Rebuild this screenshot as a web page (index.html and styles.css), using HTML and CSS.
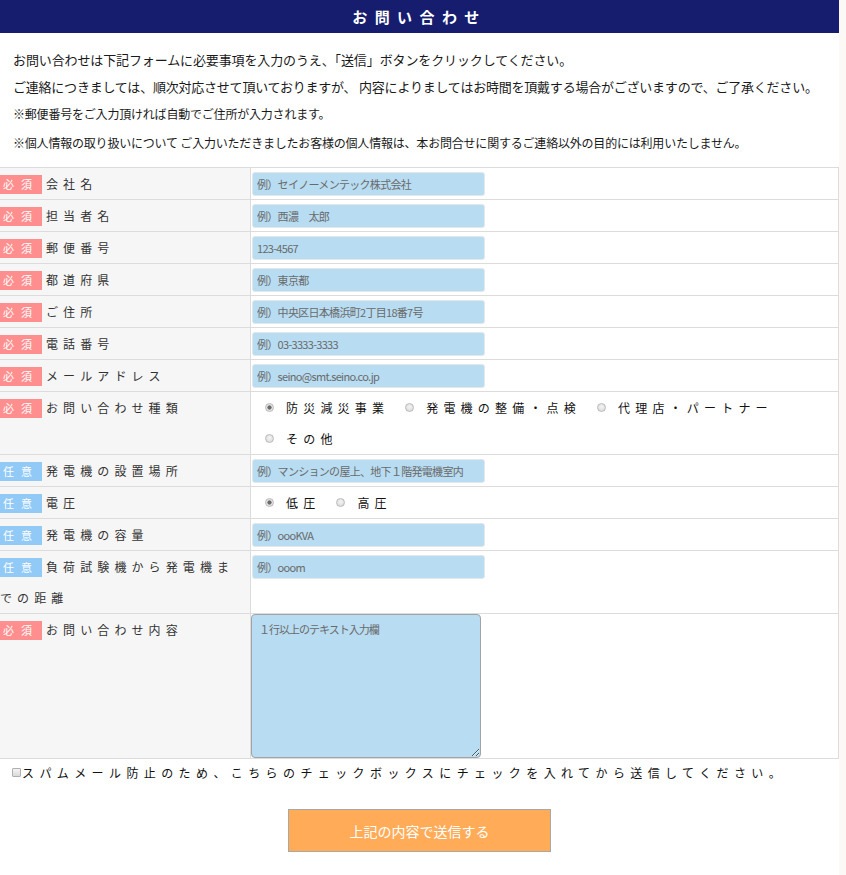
FILE: index.html
```html
<!DOCTYPE html>
<html lang="ja">
<head>
<meta charset="utf-8">
<title>お問い合わせ</title>
<link rel="stylesheet" href="styles.css">
</head>
<body>
<div class="page">
  <h1 class="title">お問い合わせ</h1>
  <div class="intro">
    <p class="lead">お問い合わせは下記フォームに必要事項を入力のうえ、「送信」ボタンをクリックしてください。</p>
    <p class="lead tight">ご連絡につきましては、順次対応させて頂いておりますが、 内容によりましてはお時間を頂戴する場合がございますので、ご了承ください。</p>
    <p class="note">※郵便番号をご入力頂ければ自動でご住所が入力されます。</p>
    <p class="note last">※個人情報の取り扱いについて ご入力いただきましたお客様の個人情報は、本お問合せに関するご連絡以外の目的には利用いたしません。</p>
  </div>

  <div class="form">
    <div class="label"><span class="badge req">必須</span><span class="name">会社名</span></div>
    <div class="field"><input class="text" type="text" placeholder="例）セイノーメンテック株式会社"></div>

    <div class="label"><span class="badge req">必須</span><span class="name">担当者名</span></div>
    <div class="field"><input class="text" type="text" placeholder="例）西濃　太郎"></div>

    <div class="label"><span class="badge req">必須</span><span class="name">郵便番号</span></div>
    <div class="field"><input class="text" type="text" placeholder="123-4567"></div>

    <div class="label"><span class="badge req">必須</span><span class="name">都道府県</span></div>
    <div class="field"><input class="text" type="text" placeholder="例）東京都"></div>

    <div class="label"><span class="badge req">必須</span><span class="name">ご住所</span></div>
    <div class="field"><input class="text" type="text" placeholder="例）中央区日本橋浜町2丁目18番7号"></div>

    <div class="label"><span class="badge req">必須</span><span class="name">電話番号</span></div>
    <div class="field"><input class="text" type="text" placeholder="例）03-3333-3333"></div>

    <div class="label"><span class="badge req">必須</span><span class="name">メールアドレス</span></div>
    <div class="field"><input class="text" type="text" placeholder="例）seino@smt.seino.co.jp"></div>

    <div class="label"><span class="badge req">必須</span><span class="name">お問い合わせ種類</span></div>
    <div class="field choices">
      <label class="opt"><input class="radio" type="radio" name="kind" checked>防災減災事業</label><label class="opt"><input class="radio" type="radio" name="kind">発電機の整備・点検</label><label class="opt"><input class="radio" type="radio" name="kind">代理店・パートナー</label><label class="opt"><input class="radio" type="radio" name="kind">その他</label>
    </div>

    <div class="label"><span class="badge opt-badge">任意</span><span class="name">発電機の設置場所</span></div>
    <div class="field"><input class="text" type="text" placeholder="例）マンションの屋上、地下１階発電機室内"></div>

    <div class="label"><span class="badge opt-badge">任意</span><span class="name">電圧</span></div>
    <div class="field choices">
      <label class="opt"><input class="radio" type="radio" name="volt" checked>低圧</label><label class="opt"><input class="radio" type="radio" name="volt">高圧</label>
    </div>

    <div class="label"><span class="badge opt-badge">任意</span><span class="name">発電機の容量</span></div>
    <div class="field"><input class="text" type="text" placeholder="例）oooKVA"></div>

    <div class="label"><span class="badge opt-badge">任意</span><span class="name">負荷試験機から発電機ま</span><span class="name">での距離</span></div>
    <div class="field"><input class="text" type="text" placeholder="例）ooom"></div>

    <div class="label"><span class="badge req">必須</span><span class="name">お問い合わせ内容</span></div>
    <div class="field area"><textarea class="textarea" placeholder="１行以上のテキスト入力欄"></textarea></div>
  </div>

  <label class="spam"><input class="check" type="checkbox">スパムメール防止のため、こちらのチェックボックスにチェックを入れてから送信してください。</label>

  <div class="actions"><button class="submit" type="button">上記の内容で送信する</button></div>
</div>
</body>
</html>
```

FILE: styles.css
```css
html, body {
  margin: 0;
  padding: 0;
}
body {
  background: #fcf8f5;
  font-family: "Noto Sans CJK JP", "Noto Sans", sans-serif;
  color: #1a1a1a;
}
.page {
  width: 839px;
  min-height: 875px;
  background: #fff;
}
.title {
  margin: 0;
  height: 33px;
  line-height: 33px;
  background: #161d6f;
  color: #fff;
  text-align: center;
  font-size: 15px;
  font-weight: bold;
  letter-spacing: 7.4px;
}
.intro {
  padding: 13px 13px 11px;
}
.intro p {
  margin: 0;
  line-height: 27px;
}
.lead {
  font-size: 13px;
  letter-spacing: -0.12px;
}
.lead.tight {
  letter-spacing: -0.22px;
}
.note {
  font-size: 12px;
  letter-spacing: -0.2px;
}
.note.last {
  margin-top: 2px !important;
}
.form {
  display: grid;
  grid-template-columns: 251px 1fr;
  width: 839px;
  box-sizing: border-box;
  border-top: 1px solid #dcdcdc;
  border-right: 1px solid #dcdcdc;
}
.label {
  box-sizing: border-box;
  background: #f6f6f6;
  border-right: 1px solid #dcdcdc;
  border-bottom: 1px solid #dcdcdc;
  font-size: 12px;
  line-height: 31px;
  letter-spacing: 5.1px;
  color: #333;
}
.badge {
  display: inline-block;
  box-sizing: border-box;
  width: 42px;
  height: 19px;
  line-height: 19px;
  padding-left: 3px;
  margin-right: 4px;
  font-size: 11px;
  letter-spacing: 7px;
  color: #fff;
  vertical-align: middle;
  position: relative;
  top: -1px;
  white-space: nowrap;
  overflow: hidden;
}
.req {
  background: #ff8e8e;
}
.opt-badge {
  background: #91c9f7;
}
.field {
  border-bottom: 1px solid #dcdcdc;
  padding: 4px 0 3px 1px;
}
.text {
  display: block;
  box-sizing: border-box;
  width: 233px;
  height: 24px;
  margin: 0;
  padding: 0 4px;
  border: 1px solid #e3e7ea;
  border-radius: 3px;
  background: #b8dcf1;
  font-family: "Noto Sans CJK JP", sans-serif;
  font-size: 11px;
  letter-spacing: -0.7px;
  color: #555;
  outline: none;
}
.text::placeholder,
.textarea::placeholder {
  color: #6a6a6a;
}
.choices {
  padding: 0 0 0 14px;
  line-height: 31px;
  font-size: 12px;
  letter-spacing: 5.2px;
  color: #111;
}
.opt {
  display: inline-block;
  margin-right: 16px;
  white-space: nowrap;
}
.radio {
  appearance: none;
  -webkit-appearance: none;
  box-sizing: border-box;
  width: 9px;
  height: 9px;
  margin: 0 12px 0 0;
  border: 1px solid #b9b9b9;
  border-radius: 50%;
  background: radial-gradient(circle at 50% 40%, #f4f4f4, #d6d6d6);
  vertical-align: middle;
  position: relative;
  top: -2px;
}
.radio:checked {
  background: radial-gradient(circle, #6a6a6a 0 1.8px, #e4e4e4 2.4px);
}
.area {
  padding: 0;
}
.textarea {
  display: block;
  box-sizing: border-box;
  width: 230px;
  height: 144px;
  margin: 0;
  padding: 6px 7px;
  border: 1px solid #a3a3a3;
  border-radius: 4px;
  background: #b8dcf1;
  font-family: "Noto Sans CJK JP", sans-serif;
  font-size: 11px;
  letter-spacing: -1px;
  color: #555;
  outline: none;
}
.spam {
  display: block;
  padding-left: 12px;
  line-height: 28px;
  font-size: 12px;
  letter-spacing: 5.4px;
  color: #111;
  white-space: nowrap;
}
.check {
  appearance: none;
  -webkit-appearance: none;
  box-sizing: border-box;
  width: 9px;
  height: 9px;
  margin: 0 1px 0 0;
  border: 1px solid #b0b0b0;
  border-radius: 1px;
  background: linear-gradient(#f4f4f4, #dadada);
  vertical-align: middle;
  position: relative;
  top: -2px;
}
.actions {
  padding-top: 22px;
  text-align: center;
}
.submit {
  width: 263px;
  height: 43px;
  margin: 0;
  padding: 0;
  background: #ffab57;
  border: 1px solid #a8a8a8;
  color: #fff;
  font-family: "Noto Sans CJK JP", sans-serif;
  font-size: 14px;
  cursor: pointer;
}
```
